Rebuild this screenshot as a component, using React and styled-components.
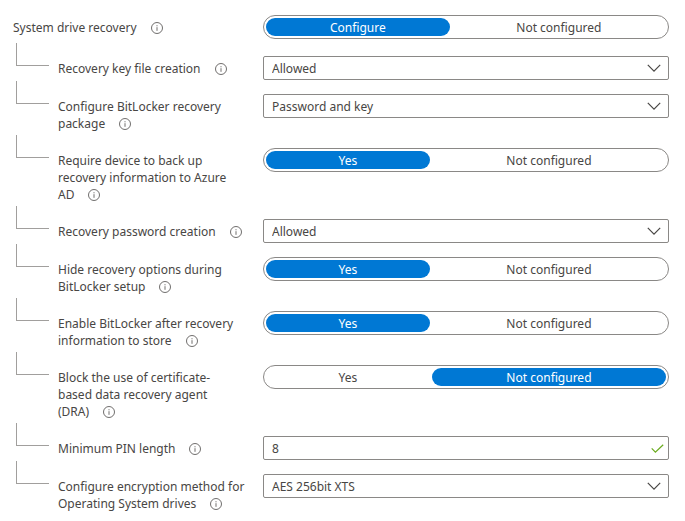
import { useState } from 'react';
import styled, { createGlobalStyle } from 'styled-components';

const GlobalStyle = createGlobalStyle`
  * {
    box-sizing: border-box;
  }

  body {
    margin: 0;
    background: #fff;
    color: #484644;
    font-family: 'Noto Sans', 'Open Sans', sans-serif;
    font-size: 12px;
    line-height: 17px;
  }
`;

const Form = styled.form`
  padding: 15px 16px 0 13px;
`;

const Row = styled.div`
  display: grid;
  grid-template-columns: 237px minmax(0, 1fr);
  column-gap: 13px;
  align-items: start;
`;

const ParentRow = styled(Row)`
  padding-bottom: 3px;
`;

const ChildRow = styled(Row)`
  grid-template-columns: 36px 198px minmax(0, 1fr);
  column-gap: 0;
  padding-left: 3px;

  > :last-child {
    margin: 14px 0 0 13px;
  }
`;

const Connector = styled.span`
  width: 33px;
  height: 23px;
  margin-top: 1px;
  border-left: 1px solid #a19f9d;
  border-bottom: 1px solid #a19f9d;
`;

// The text reserves the icon's room, so the icon never wraps away from the last word
const Caption = styled.div`
  padding: ${({ $child }) => ($child ? '18px 0 2px 6px' : '4px 0 2px')};
  white-space: pre-line;

  > :first-child {
    padding-right: 26px;
  }
`;

const InfoButton = styled.button`
  display: inline-flex;
  margin: 0 0 0 -12px;
  padding: 0;
  border: 0;
  background: none;
  color: #605e5c;
  vertical-align: -2px;
  cursor: pointer;
`;

const Segments = styled.div`
  display: grid;
  grid-template-columns: ${({ $columns }) => $columns};
  gap: 2px;
  height: 24px;
  padding: 2px;
  border: 1px solid #8a8886;
  border-radius: 12px;
`;

const Segment = styled.label`
  display: flex;
  align-items: center;
  justify-content: center;
  border-radius: 9px;
  cursor: pointer;

  &:has(input:checked) {
    background: #0078d4;
    color: #fff;
  }

  &:has(input:focus-visible) {
    outline: 1px solid #323130;
  }
`;

const Radio = styled.input`
  appearance: none;
  width: 0;
  height: 0;
  margin: 0;
  outline: 0;
`;

const Field = styled.div`
  display: grid;
  grid-template-columns: minmax(0, 1fr) auto;
  align-items: center;

  > * {
    grid-row: 1;
  }

  > svg {
    grid-column: 2;
    margin-right: ${({ $inset }) => $inset}px;
    pointer-events: none;
  }
`;

const TextInput = styled.input`
  grid-column: 1 / -1;
  width: 100%;
  height: 24px;
  padding: 0 24px 0 8px;
  border: 1px solid #8a8886;
  border-radius: 2px;
  background: #fff;
  color: inherit;
  font: inherit;
`;

const Select = styled(TextInput).attrs({ as: 'select' })`
  appearance: none;
`;

function InfoIcon() {
  return (
    <svg width="12" height="12" viewBox="0 0 12 12" fill="none" stroke="currentColor" aria-hidden="true">
      <circle cx="6" cy="6" r="5.5" strokeWidth="0.9" />
      <path d="M6 5.2v3.6M6 3.2v1.1" strokeWidth="0.9" />
    </svg>
  );
}

function ChevronIcon() {
  return (
    <svg width="14" height="8" viewBox="0 0 14 8" fill="none" stroke="#484644" strokeWidth="1.2" aria-hidden="true">
      <path d="M0.8 0.9 7 7.1l6.2-6.2" />
    </svg>
  );
}

function CheckIcon() {
  return (
    <svg width="13" height="9" viewBox="0 0 13 9" fill="none" stroke="#6bab1f" strokeWidth="1.2" aria-hidden="true">
      <path d="M0.7 4.4 4.4 8.1 12.2 0.7" />
    </svg>
  );
}

const settings = [
  { id: 'key-file', label: 'Recovery key file creation', type: 'select', options: ['Allowed', 'Required', 'Blocked'] },
  { id: 'package', label: 'Configure BitLocker recovery package', type: 'select', options: ['Password and key', 'Password only'] },
  { id: 'backup', label: 'Require device to back up recovery information to Azure AD', type: 'toggle', options: ['Yes', 'Not configured'], value: 'Yes' },
  { id: 'password', label: 'Recovery password creation', type: 'select', options: ['Allowed', 'Required', 'Blocked'] },
  { id: 'hide', label: 'Hide recovery options during BitLocker setup', type: 'toggle', options: ['Yes', 'Not configured'], value: 'Yes' },
  { id: 'enable', label: 'Enable BitLocker after recovery information to store', type: 'toggle', options: ['Yes', 'Not configured'], value: 'Yes' },
  { id: 'dra', label: 'Block the use of certificate-\nbased data recovery agent (DRA)', type: 'toggle', options: ['Yes', 'Not configured'], value: 'Not configured' },
  { id: 'pin', label: 'Minimum PIN length', type: 'text', value: '8' },
  { id: 'encryption', label: 'Configure encryption method for Operating System drives', type: 'select', options: ['AES 256bit XTS', 'AES 128bit XTS'] },
];

function Toggle({ id, options, value, columns = '7fr 10fr' }) {
  const [selected, setSelected] = useState(value);

  return (
    <Segments role="radiogroup" aria-labelledby={`${id}-label`} $columns={columns}>
      {options.map((option) => (
        <Segment key={option}>
          <Radio
            type="radio"
            name={id}
            value={option}
            checked={selected === option}
            onChange={() => setSelected(option)}
          />
          {option}
        </Segment>
      ))}
    </Segments>
  );
}

function Control({ setting }) {
  const { id, type, options, value, columns } = setting;

  if (type === 'toggle') {
    return <Toggle id={id} options={options} value={value} columns={columns} />;
  }

  if (type === 'text') {
    return (
      <Field $inset={5}>
        <TextInput id={id} type="text" defaultValue={value} />
        <CheckIcon />
      </Field>
    );
  }

  return (
    <Field $inset={8}>
      <Select id={id}>
        {options.map((option) => (
          <option key={option}>{option}</option>
        ))}
      </Select>
      <ChevronIcon />
    </Field>
  );
}

function SettingCaption({ setting, child }) {
  const { id, type, label } = setting;

  return (
    <Caption $child={child}>
      {type === 'toggle' ? <span id={`${id}-label`}>{label}</span> : <label htmlFor={id}>{label}</label>}
      <InfoButton type="button" aria-label="More information" aria-describedby={type === 'toggle' ? `${id}-label` : undefined}>
        <InfoIcon />
      </InfoButton>
    </Caption>
  );
}

const systemDrive = {
  id: 'system-drive',
  label: 'System drive recovery',
  type: 'toggle',
  options: ['Configure', 'Not configured'],
  value: 'Configure',
  columns: '6fr 7fr',
};

function App() {
  return (
    <>
      <GlobalStyle />
      <Form>
        <ParentRow>
          <SettingCaption setting={systemDrive} />
          <Control setting={systemDrive} />
        </ParentRow>
        {settings.map((setting) => (
          <ChildRow key={setting.id}>
            <Connector />
            <SettingCaption setting={setting} child />
            <Control setting={setting} />
          </ChildRow>
        ))}
      </Form>
    </>
  );
}

export default App;
